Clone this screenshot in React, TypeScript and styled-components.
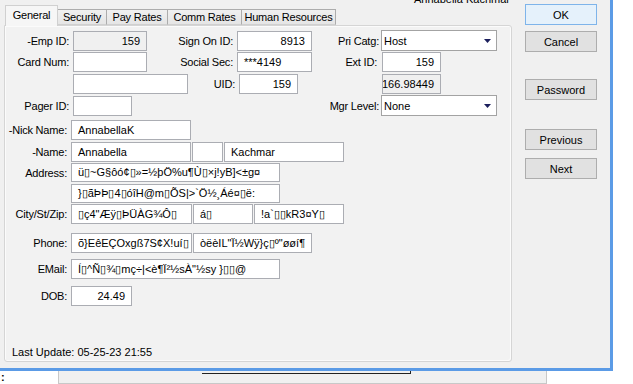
import React from 'react';
import styled, { createGlobalStyle } from 'styled-components';

const GlobalStyle = createGlobalStyle`
  html, body {
    margin: 0;
    padding: 0;
    background: #ffffff;
  }
  body {
    font-family: "Liberation Sans", Arial, sans-serif;
    font-size: 11px;
    color: #000;
  }
`;

const Screen = styled.div`
  width: 633px;
  height: 384px;
  overflow: hidden;
  display: flex;
  flex-direction: column;
`;

const Window = styled.div`
  width: 610px;
  height: 368px;
  flex-shrink: 0;
  display: flex;
  background: #f0f0f0;
  border-right: 3px solid #5b9be6;
  border-bottom: 3px solid #5b9be6;
`;

const LeftPane = styled.div`
  width: 512px;
  box-sizing: border-box;
  padding-left: 4px;
  display: flex;
  flex-direction: column;
`;

const Title = styled.div`
  height: 12px;
  margin-top: -7px;
  line-height: 13px;
  text-align: right;
  padding-right: 2px;
  white-space: nowrap;
`;

const TabStrip = styled.div`
  height: 20px;
  display: flex;
  align-items: flex-end;
  padding-left: 1px;
  position: relative;
  z-index: 1;
`;

const Tab = styled.div<{ $w: number; $active?: boolean }>`
  width: ${({ $w }) => $w}px;
  height: ${({ $active }) => ($active ? 21 : 16)}px;
  margin-right: -1px;
  margin-bottom: ${({ $active }) => ($active ? -1 : 0)}px;
  box-sizing: border-box;
  border: 1px solid ${({ $active }) => ($active ? '#d0d0d0' : '#acacac')};
  border-bottom: ${({ $active }) => ($active ? 'none' : '1px solid #d0d0d0')};
  background: ${({ $active }) => ($active ? '#f6f6f6' : 'linear-gradient(#f0f0f0, #e5e5e5)')};
  display: flex;
  align-items: center;
  justify-content: center;
  padding-bottom: ${({ $active }) => ($active ? 2 : 0)}px;
  position: relative;
  z-index: ${({ $active }) => ($active ? 2 : 1)};
  letter-spacing: -0.2px;
  white-space: nowrap;
`;

const Panel = styled.div`
  width: 508px;
  height: 337px;
  box-sizing: border-box;
  border: 1px solid #d5d5d5;
  border-radius: 0 3px 3px 3px;
  box-shadow: inset 1px 1px 0 #fbfbfb, inset -1px -1px 0 #fbfbfb;
  background: #f2f2f2;
  display: flex;
  flex-direction: column;
  padding-top: 4px;
`;

const Row = styled.div<{ $mt: number; $h?: number }>`
  display: flex;
  align-items: center;
  height: ${({ $h }) => $h ?? 20}px;
  margin-top: ${({ $mt }) => $mt}px;
  flex-shrink: 0;
`;

const Label = styled.div<{ $w: number; $pr?: number }>`
  width: ${({ $w }) => $w}px;
  flex-shrink: 0;
  box-sizing: border-box;
  padding-right: ${({ $pr }) => $pr ?? 4}px;
  text-align: right;
  letter-spacing: -0.2px;
  white-space: nowrap;
`;

const Field = styled.div<{ $w: number; $h?: number; $ml?: number; $right?: boolean; $off?: boolean }>`
  width: ${({ $w }) => $w}px;
  height: ${({ $h }) => $h ?? 20}px;
  margin-left: ${({ $ml }) => $ml ?? 0}px;
  flex-shrink: 0;
  box-sizing: border-box;
  border: 1px solid #abadb3;
  background: ${({ $off }) => ($off ? '#f0f0f0' : '#ffffff')};
  display: flex;
  align-items: center;
  justify-content: ${({ $right }) => ($right ? 'flex-end' : 'flex-start')};
  padding: 0 6px;
  overflow: hidden;
  white-space: nowrap;
`;

const Select = styled.div<{ $w: number }>`
  width: ${({ $w }) => $w}px;
  height: 21px;
  flex-shrink: 0;
  box-sizing: border-box;
  border: 1px solid #a3a3a3;
  background: #ffffff;
  display: flex;
  align-items: center;
  padding: 0 5px 0 2px;
  white-space: nowrap;
`;

const Arrow = styled.svg`
  margin-left: auto;
  flex-shrink: 0;
`;

const Footer = styled.div`
  margin-top: auto;
  padding: 0 0 2px 7px;
  line-height: 13px;
  white-space: nowrap;
`;

const ButtonColumn = styled.div`
  padding-left: 13px;
  display: flex;
  flex-direction: column;
`;

const Button = styled.div<{ $mt: number; $primary?: boolean }>`
  width: 72px;
  height: 21px;
  margin-top: ${({ $mt }) => $mt}px;
  box-sizing: border-box;
  border: 1px solid ${({ $primary }) => ($primary ? '#7eb4ea' : '#adadad')};
  background: ${({ $primary }) => ($primary ? '#e5f1fb' : '#e1e1e1')};
  display: flex;
  align-items: center;
  justify-content: center;
`;

const Below = styled.div`
  height: 13px;
  display: flex;
`;

const Colon = styled.div`
  width: 57px;
  padding-left: 1px;
  line-height: 12px;
  font-weight: bold;
`;

const BehindWindow = styled.div`
  width: 489px;
  height: 13px;
  box-sizing: border-box;
  border: 1px solid #c8c8c8;
  border-top: none;
  background: #f0f0f0;
`;

const BehindEdge = styled.div`
  width: 208px;
  height: 2px;
  margin-left: 143px;
  border-bottom: 1px solid #222;
  border-right: 1px solid #222;
`;

const DropArrow = () => (
  <Arrow width="7" height="4" viewBox="0 0 7 4">
    <polygon points="0,0 7,0 3.5,4" fill="#1b1f5c" />
  </Arrow>
);

const tabs = [
  { name: 'General', w: 53 },
  { name: 'Security', w: 50 },
  { name: 'Pay Rates', w: 62 },
  { name: 'Comm Rates', w: 75 },
  { name: 'Human Resources', w: 95 },
];

// scrambled values as they come out of the record (▯ = unprintable char)
const address1 = 'ü▯~G§ôó¢▯»=½þÖ%u¶Ù▯×j!yB]<±g¤';
const address2 = '}▯ãÞÞ▯4▯óîH@m▯ÕS|>`Ö½¸Áé¤▯ë:';
const city = '▯ç4"Æÿ▯ÞÜÀG¾Ô▯';
const state = 'á▯';
const zip = '!a`▯▯kR3¤Y▯';
const phone1 = 'õ}EêEÇOxgß7S¢X!uí▯';
const phone2 = 'òëèIL"Ï½Wÿ}ç▯º"øøí¶';
const email = 'Í▯^Ñ▯¾▯mç÷|<è¶Ï²½sÀ"½sy }▯▯@';

export default function App() {
  return (
    <Screen>
      <GlobalStyle />
      <Window>
        <LeftPane>
          <Title>Annabella Kachmar</Title>
          <TabStrip>
            {tabs.map((t, i) => (
              <Tab key={t.name} $w={t.w} $active={i === 0}>{t.name}</Tab>
            ))}
          </TabStrip>
          <Panel>
            <Row $mt={0} $h={21}>
              <Label $w={68}>-Emp ID:</Label>
              <Field $w={74} $right $off>159</Field>
              <Label $w={90}>Sign On ID:</Label>
              <Field $w={75} $right>8913</Field>
              <Label $w={69} $pr={2}>Pri Catg:</Label>
              <Select $w={116}>Host<DropArrow /></Select>
            </Row>
            <Row $mt={1}>
              <Label $w={68}>Card Num:</Label>
              <Field $w={74} />
              <Label $w={90}>Social Sec:</Label>
              <Field $w={75}>***4149</Field>
              <Label $w={70} $pr={5}>Ext ID:</Label>
              <Field $w={59} $right>159</Field>
            </Row>
            <Row $mt={2}>
              <Label $w={68} />
              <Field $w={115} />
              <Label $w={51}>UID:</Label>
              <Field $w={59} $right>159</Field>
              <Label $w={84} />
              <Field $w={59} $right $off>166.98449</Field>
            </Row>
            <Row $mt={1} $h={21}>
              <Label $w={68}>Pager ID:</Label>
              <Field $w={59} />
              <Label $w={249} $pr={2}>Mgr Level:</Label>
              <Select $w={116}>None<DropArrow /></Select>
            </Row>
            <Row $mt={4}>
              <Label $w={66}>-Nick Name:</Label>
              <Field $w={120}>AnnabellaK</Field>
            </Row>
            <Row $mt={2}>
              <Label $w={66}>-Name:</Label>
              <Field $w={120}>Annabella</Field>
              <Field $w={31} $ml={1} />
              <Field $w={120} $ml={1}>Kachmar</Field>
            </Row>
            <Row $mt={1} $h={19}>
              <Label $w={66}>Address:</Label>
              <Field $w={209} $h={19}>{address1}</Field>
            </Row>
            <Row $mt={2} $h={19}>
              <Label $w={66} />
              <Field $w={209} $h={19}>{address2}</Field>
            </Row>
            <Row $mt={1}>
              <Label $w={66}>City/St/Zip:</Label>
              <Field $w={121}>{city}</Field>
              <Field $w={60} $ml={1}>{state}</Field>
              <Field $w={90} $ml={1}>{zip}</Field>
            </Row>
            <Row $mt={9}>
              <Label $w={66}>Phone:</Label>
              <Field $w={121}>{phone1}</Field>
              <Field $w={119} $ml={1}>{phone2}</Field>
            </Row>
            <Row $mt={6}>
              <Label $w={66}>EMail:</Label>
              <Field $w={209}>{email}</Field>
            </Row>
            <Row $mt={7}>
              <Label $w={66}>DOB:</Label>
              <Field $w={61} $right>24.49</Field>
            </Row>
            <Footer>Last Update: 05-25-23 21:55</Footer>
          </Panel>
        </LeftPane>
        <ButtonColumn>
          <Button $mt={4} $primary>OK</Button>
          <Button $mt={6}>Cancel</Button>
          <Button $mt={27}>Password</Button>
          <Button $mt={29}>Previous</Button>
          <Button $mt={8}>Next</Button>
        </ButtonColumn>
      </Window>
      <Below>
        <Colon>:</Colon>
        <BehindWindow>
          <BehindEdge />
        </BehindWindow>
      </Below>
    </Screen>
  );
}
